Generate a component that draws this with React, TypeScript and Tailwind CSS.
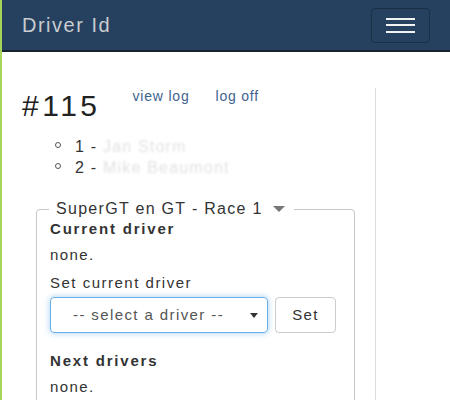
export default function App() {
  const drivers = [
    { pos: 1, name: "Jan Storm" },
    { pos: 2, name: "Mike Beaumont" },
  ];

  return (
    <div className="min-h-screen bg-white border-l-2 border-[#a5d65a] font-['Liberation_Sans',Arial,sans-serif] text-[#333]">
      {/* NAVBAR */}
      <nav className="h-[52px] bg-[#26405f] border-b-2 border-[#17222f] flex items-center justify-between pl-[20px] pr-[20px]">
        <span className="text-[20px] tracking-[1.5px] text-[#c9ccd0]">Driver Id</span>
        <button className="w-[59px] h-[35px] border border-[#1b2f46] rounded-[4px] flex flex-col items-center justify-center gap-[4.5px]">
          <span className="block w-[29px] h-[2px] bg-[#f2f2f2]" />
          <span className="block w-[29px] h-[2px] bg-[#f2f2f2]" />
          <span className="block w-[29px] h-[2px] bg-[#f2f2f2]" />
        </button>
      </nav>

      {/* CONTENT */}
      <div className="pt-[36px] flex">
        <div className="w-[374px] min-h-[320px] pl-[20px] border-r border-[#ddd] pb-[40px]">
          <div className="flex items-start">
            <h1 className="mt-[1px] text-[30px] leading-[1.1] tracking-[3.5px] font-normal text-[#222]">#115</h1>
            <a className="ml-[32px] text-[14px] leading-[16px] tracking-[0.8px] text-[#3e638e]">view log</a>
            <a className="ml-[26px] text-[14px] leading-[16px] tracking-[0.8px] text-[#3e638e]">log off</a>
          </div>

          <ul className="mt-[14px] pl-[33px] text-[16px] leading-[21px] tracking-[1.2px]">
            {drivers.map((d) => (
              <li key={d.pos} className="flex items-start">
                <span className="mt-[6px] w-[6px] h-[6px] border border-[#555] rounded-full" />
                <span className="ml-[14px]">
                  {d.pos} - <span className="text-[#e2e2e2] blur-[1px]">{d.name}</span>
                </span>
              </li>
            ))}
          </ul>

          {/* RACE */}
          <fieldset className="mt-[21px] ml-[14px] w-[319px] border border-[#c8c8c8] rounded-[4px] px-[13px] pb-[60px]">
            <legend className="ml-[-1px] pl-[7px] pr-[9px] text-[16px] leading-[20px] tracking-[1.3px]">
              <span className="inline-flex items-center">
                SuperGT en GT - Race 1
                <svg width="12" height="6" viewBox="0 0 12 6" className="ml-[10px]">
                  <polygon points="0,0 12,0 6,6" fill="#777" />
                </svg>
              </span>
            </legend>

            <div className="text-[15px] leading-[20px]">
              <p className="font-bold tracking-[1.8px]">Current driver</p>
              <p className="mt-[6px] tracking-[1.4px]">none.</p>
              <p className="mt-[8px] tracking-[1.5px]">Set current driver</p>

              <div className="mt-[4px] flex gap-[7px]">
                <div className="w-[218px] h-[36px] border border-[#66afe9] rounded-[4px] shadow-[0_0_6px_rgba(102,175,233,0.6)] flex items-center pl-[22px] pr-[9px] text-[#555] tracking-[1.4px]">
                  <span className="flex-1">-- select a driver --</span>
                  <svg width="8" height="5" viewBox="0 0 8 5">
                    <polygon points="0,0 8,0 4,5" fill="#333" />
                  </svg>
                </div>
                <button className="w-[61px] h-[36px] border border-[#ccc] rounded-[4px] bg-white tracking-[1.4px]">Set</button>
              </div>

              <p className="mt-[18px] font-bold tracking-[1.8px]">Next drivers</p>
              <p className="mt-[6px] tracking-[1.4px]">none.</p>
            </div>
          </fieldset>
        </div>
      </div>
    </div>
  );
}
